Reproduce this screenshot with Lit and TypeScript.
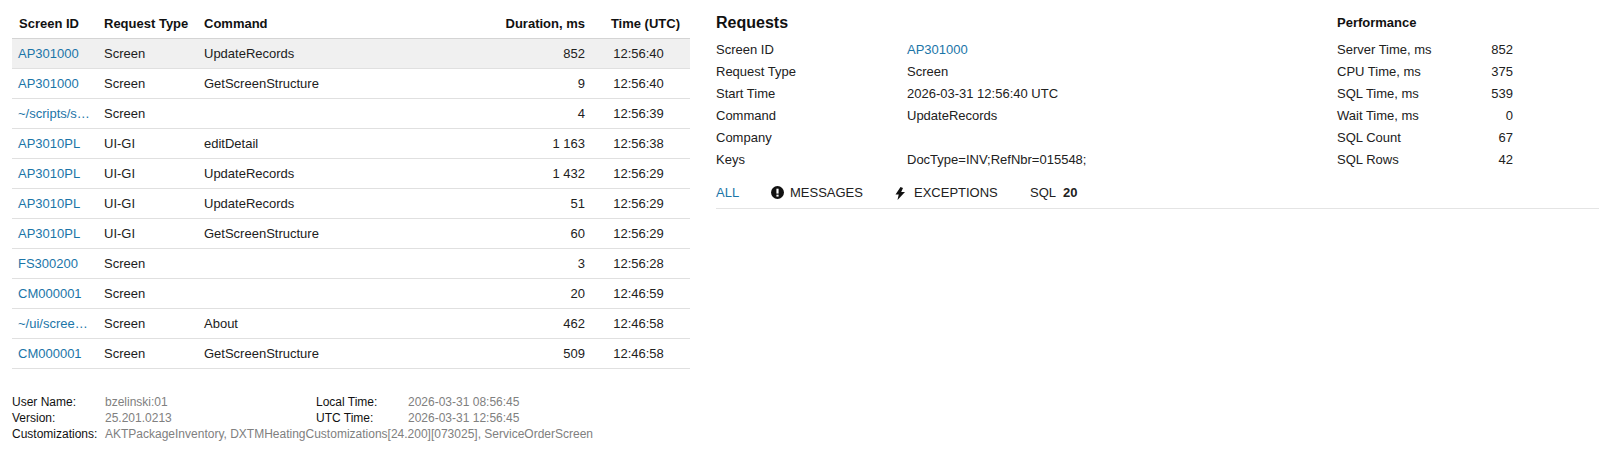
import { LitElement, html, css } from "lit";
import { customElement } from "lit/decorators.js";

const rows = [
  ["AP301000", "Screen", "UpdateRecords", "852", "12:56:40"],
  ["AP301000", "Screen", "GetScreenStructure", "9", "12:56:40"],
  ["~/scripts/s…", "Screen", "", "4", "12:56:39"],
  ["AP3010PL", "UI-GI", "editDetail", "1 163", "12:56:38"],
  ["AP3010PL", "UI-GI", "UpdateRecords", "1 432", "12:56:29"],
  ["AP3010PL", "UI-GI", "UpdateRecords", "51", "12:56:29"],
  ["AP3010PL", "UI-GI", "GetScreenStructure", "60", "12:56:29"],
  ["FS300200", "Screen", "", "3", "12:56:28"],
  ["CM000001", "Screen", "", "20", "12:46:59"],
  ["~/ui/scree…", "Screen", "About", "462", "12:46:58"],
  ["CM000001", "Screen", "GetScreenStructure", "509", "12:46:58"],
];
const details: [string, string, boolean?][] = [
  ["Screen ID", "AP301000", true],
  ["Request Type", "Screen"],
  ["Start Time", "2026-03-31 12:56:40 UTC"],
  ["Command", "UpdateRecords"],
  ["Company", ""],
  ["Keys", "DocType=INV;RefNbr=015548;"],
];
const perf = [
  ["Server Time, ms", "852"],
  ["CPU Time, ms", "375"],
  ["SQL Time, ms", "539"],
  ["Wait Time, ms", "0"],
  ["SQL Count", "67"],
  ["SQL Rows", "42"],
];

@customElement("app-root")
export class AppRoot extends LitElement {
  static styles = css`
    :host {
      display: flex;
      width: 1599px;
      height: 457px;
      overflow: hidden;
      background: #fff;
      font-family: "Liberation Sans", Arial, sans-serif;
      font-size: 13px;
      color: #212121;
    }
    .left { width: 678px; margin-left: 12px; flex: none; }
    .row {
      display: grid;
      grid-template-columns: 92px 100px 1fr 81px 105px;
      height: 30px;
      align-items: center;
      box-sizing: border-box;
      border-bottom: 1px solid #e0e0e0;
    }
    .row.head { height: 39px; padding-top: 9px; font-weight: 700; color: #111; border-bottom: 1px solid #d4d4d4; }
    .row.head > span:first-child { padding-left: 7px; }
    .row.sel { background: #f0f0f0; }
    .id { padding-left: 6px; }
    a { color: #1b75a8; text-decoration: none; }
    .num { text-align: right; }
    .time { text-align: center; padding-left: 2px; }
    .row.head .num { white-space: nowrap; direction: rtl; }
    .row.head .time { white-space: nowrap; padding-left: 0; text-align: right; padding-right: 10px; }
    .foot {
      display: grid;
      grid-template-columns: 93px 211px 92px 1fr;
      margin-top: 25px;
      font-size: 12px;
      line-height: 16px;
      color: #111;
    }
    .foot .v { color: #808080; }
    .foot .wide { grid-column: 2 / 5; }
    .right { flex: 1; margin-left: 26px; min-width: 0; }
    .top { display: flex; }
    .reqs { width: 621px; }
    h2 { margin: 0; font-size: 16px; line-height: 20px; padding-top: 13px; padding-bottom: 5px; color: #111; font-weight: 700; }
    h3 { margin: 0; font-size: 13px; line-height: 20px; padding-top: 13px; padding-bottom: 5px; color: #111; font-weight: 700; }
    .kv { display: grid; height: 22px; align-items: center; }
    .reqs .kv { grid-template-columns: 191px 1fr; }
    .perf .kv { grid-template-columns: 150px 26px; width: 176px; }
    .perf .kv span:last-child { text-align: right; }
    .tabs {
      display: flex;
      align-items: center;
      height: 40px;
      border-bottom: 1px solid #e4e4e4;
      margin-top: -1px;
      box-sizing: border-box;
      padding-top: 7px;
    }
    .tab { display: flex; align-items: center; white-space: nowrap; }
    .tab svg { margin-right: 6px; display: block; }
    .tab svg.bolt { margin-right: 8px; margin-top: 3px; }
    .tab b { margin-left: 7px; }
    .t1 { width: 55px; }
    .t2 { width: 122px; }
    .t3 { width: 137px; }
  `;

  render() {
    return html`
      <div class="left">
        <div class="row head">
          <span>Screen ID</span><span>Request Type</span><span>Command</span>
          <span class="num"><bdi>Duration, ms</bdi></span><span class="time">Time (UTC)</span>
        </div>
        ${rows.map(
          (r, i) => html`<div class="row ${i === 0 ? "sel" : ""}">
            <span class="id"><a href="#">${r[0]}</a></span><span>${r[1]}</span><span>${r[2]}</span>
            <span class="num">${r[3]}</span><span class="time">${r[4]}</span>
          </div>`
        )}
        <div class="foot">
          <span>User Name:</span><span class="v">bzelinski:01</span><span>Local Time:</span><span class="v">2026-03-31 08:56:45</span>
          <span>Version:</span><span class="v">25.201.0213</span><span>UTC Time:</span><span class="v">2026-03-31 12:56:45</span>
          <span>Customizations:</span><span class="v wide">AKTPackageInventory, DXTMHeatingCustomizations[24.200][073025], ServiceOrderScreen</span>
        </div>
      </div>
      <div class="right">
        <div class="top">
          <div class="reqs">
            <h2>Requests</h2>
            ${details.map(
              (d) => html`<div class="kv"><span>${d[0]}</span><span>${d[2] ? html`<a href="#">${d[1]}</a>` : d[1]}</span></div>`
            )}
          </div>
          <div class="perf">
            <h3>Performance</h3>
            ${perf.map((p) => html`<div class="kv"><span>${p[0]}</span><span>${p[1]}</span></div>`)}
          </div>
        </div>
        <div class="tabs">
          <a class="tab t1" href="#">ALL</a>
          <span class="tab t2">
            <svg width="13" height="13" viewBox="0 0 12 12"><circle cx="6" cy="6" r="6" fill="#111"/><rect x="5" y="2.5" width="2" height="4.5" fill="#fff"/><rect x="5" y="8" width="2" height="1.8" fill="#fff"/></svg>MESSAGES
          </span>
          <span class="tab t3">
            <svg class="bolt" width="13" height="13" viewBox="0 0 13 13"><path d="M7.500 0 2.500 7.500h3.200L4.500 13 12 5H8.200L10 1z" fill="#111"/></svg>EXCEPTIONS
          </span>
          <span class="tab">SQL<b>20</b></span>
        </div>
      </div>
    `;
  }
}
